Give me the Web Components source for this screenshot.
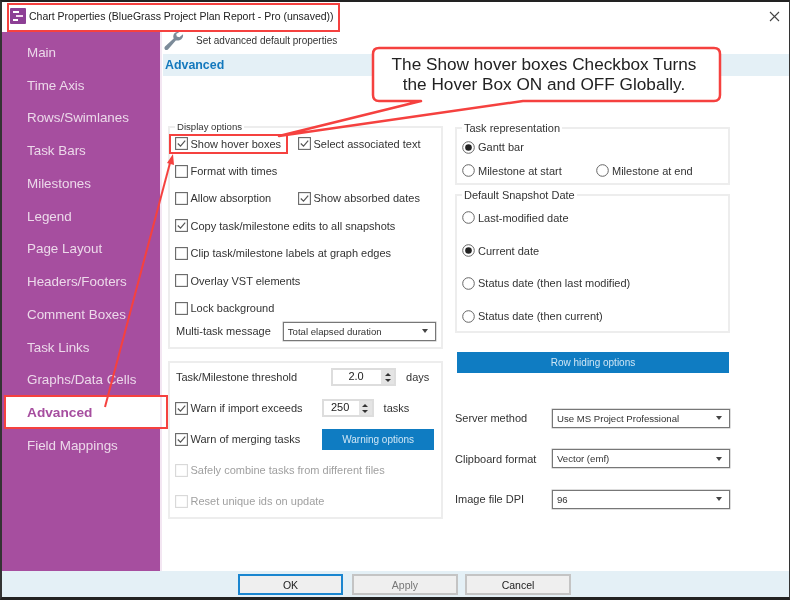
<!DOCTYPE html>
<html>
<head>
<meta charset="utf-8">
<title>Chart Properties</title>
<style>
  html, body { margin: 0; height: 100%; background: #fff; }
  body { font: 11px "Liberation Sans", Arial, sans-serif; color: #333; overflow: hidden; }
</style>
</head>
<body>
<chart-dialog>
  <side-nav slot="nav" selected="Advanced"></side-nav>
  <section-head slot="head" hint="Set advanced default properties" heading="Advanced"></section-head>

  <div slot="left" style="display:flex;flex-direction:column;gap:12px">
    <group-box legend="Display options" legend-size="9.6" rows="repeat(7,27.4px) 19px" offset="-2" end="6">
      <check-row checked label="Show hover boxes" side-label="Select associated text" side-checked></check-row>
      <check-row label="Format with times"></check-row>
      <check-row label="Allow absorption" side-label="Show absorbed dates" side-checked></check-row>
      <check-row checked label="Copy task/milestone edits to all snapshots"></check-row>
      <check-row label="Clip task/milestone labels at graph edges"></check-row>
      <check-row label="Overlay VST elements"></check-row>
      <check-row label="Lock background"></check-row>
      <form-row label="Multi-task message" gap="12" indent="1.5"><drop-down value="Total elapsed duration" width="153"></drop-down></form-row>
    </group-box>
    <group-box rows="repeat(5,31px)" offset="-1">
      <form-row label="Task/Milestone threshold" gap="34" indent="1.5"><spin-box value="2.0" width="65"></spin-box><span style="margin-left:10px">days</span></form-row>
      <check-row checked label="Warn if import exceeds" gap="19"><spin-box value="250" width="52"></spin-box><span style="margin-left:10px">tasks</span></check-row>
      <check-row checked label="Warn of merging tasks" gap="22"><flat-button width="112" height="21">Warning options</flat-button></check-row>
      <check-row disabled label="Safely combine tasks from different files"></check-row>
      <check-row disabled label="Reset unique ids on update"></check-row>
    </group-box>
  </div>

  <div slot="right" style="display:flex;flex-direction:column">
    <group-box legend="Task representation" rows="repeat(2,23.5px)" offset="2.5" style="margin-bottom:5px">
      <radio-row checked label="Gantt bar"></radio-row>
      <radio-row label="Milestone at start" side-label="Milestone at end"></radio-row>
    </group-box>
    <group-box legend="Default Snapshot Date" rows="repeat(4,32.8px)" offset="2" end="-1.4">
      <radio-row label="Last-modified date"></radio-row>
      <radio-row checked label="Current date"></radio-row>
      <radio-row label="Status date (then last modified)"></radio-row>
      <radio-row label="Status date (then current)"></radio-row>
    </group-box>
    <flat-button width="272" height="21" style="margin:18.5px 0 0 2px">Row hiding options</flat-button>
    <div style="display:flex;flex-direction:column;gap:21.5px;margin-top:36px">
      <form-row label="Server method" label-width="97"><drop-down value="Use MS Project Professional" width="178"></drop-down></form-row>
      <form-row label="Clipboard format" label-width="97"><drop-down value="Vector (emf)" width="178"></drop-down></form-row>
      <form-row label="Image file DPI" label-width="97"><drop-down value="96" width="178"></drop-down></form-row>
    </div>
  </div>
</chart-dialog>
<red-markup></red-markup>

<script>
const sheet = `
  :host { box-sizing: border-box; }
  * { box-sizing: border-box; }
`

class ChartDialog extends HTMLElement {
  constructor() {
    super()
    this.attachShadow({ mode: 'open' })
    this.shadowRoot.innerHTML = `
      <style>${sheet}
        :host { display: flex; flex-direction: column; width: 790px; height: 600px; background: #fff;
          border-top: 2px solid #222; border-left: 2px solid #333; border-right: 1px solid #333; border-bottom: 3px solid #222;
          filter: blur(.45px); }
        .title { display: flex; align-items: center; height: 30px; flex: none; padding: 0 0 2px 8px; gap: 3px; color: #222; font-size: 10.5px; }
        .title svg { flex: none; }
        .close { margin-left: auto; margin-right: 9px; }
        .body { flex: 1; display: flex; min-height: 0; }
        .nav { width: 160px; flex: none; background: #a64e9f; border-right: 2px solid #f3e6f2; }
        .main { flex: 1; min-width: 0; padding-left: 1px; }
        .cols { display: flex; padding: 0 0 0 5px; }
        .col-left { width: 275px; flex: none; }
        .col-right { width: 275px; flex: none; margin-left: 12px; padding-top: 1px; }
        .foot { height: 26px; flex: none; background: #e4f0f6; display: flex; padding: 3px 0 0 236px; }
        .foot-in { display: flex; gap: 9px; }
        .foot-in dialog-button:last-child { margin-left: -2px; }
      </style>
      <div class="title">
        <svg width="16" height="16" viewBox="0 0 16 16">
          <rect width="16" height="16" rx="1" fill="#8d3f95"/>
          <rect x="3" y="3" width="6" height="2" fill="#fff"/>
          <rect x="6" y="7" width="7" height="2" fill="#f3d9ef"/>
          <rect x="3" y="11" width="5" height="2" fill="#fff"/>
        </svg>
        <span>Chart Properties (BlueGrass Project Plan Report - Pro (unsaved))</span>
        <svg class="close" width="11" height="11" viewBox="0 0 11 11"><path d="M1 1l9 9M10 1l-9 9" stroke="#444" stroke-width="1.1" fill="none"/></svg>
      </div>
      <div class="body">
        <div class="nav"><slot name="nav"></slot></div>
        <div class="main">
          <slot name="head"></slot>
          <div class="cols">
            <div class="col-left"><slot name="left"></slot></div>
            <div class="col-right"><slot name="right"></slot></div>
          </div>
        </div>
      </div>
      <div class="foot"><div class="foot-in">
        <dialog-button primary>OK</dialog-button>
        <dialog-button disabled>Apply</dialog-button>
        <dialog-button>Cancel</dialog-button>
      </div></div>`
  }
}

class SideNav extends HTMLElement {
  connectedCallback() {
    const names = ['Main', 'Time Axis', 'Rows/Swimlanes', 'Task Bars', 'Milestones', 'Legend', 'Page Layout',
      'Headers/Footers', 'Comment Boxes', 'Task Links', 'Graphs/Data Cells', 'Advanced', 'Field Mappings']
    const selected = this.getAttribute('selected')
    this.attachShadow({ mode: 'open' })
    this.shadowRoot.innerHTML = `
      <style>${sheet}
        :host { display: block; padding-top: 4px; }
        div { height: 32.75px; display: flex; align-items: center; padding-left: 25px; color: #ecd9ea; font-size: 13.4px; }
        .on { background: #fff; color: #a64e9f; font-weight: bold; font-size: 13.7px; margin-left: 3px; padding-left: 22px; }
      </style>
      ${names.map(n => `<div class="${n === selected ? 'on' : ''}">${n}</div>`).join('')}`
  }
}

class SectionHead extends HTMLElement {
  connectedCallback() {
    this.attachShadow({ mode: 'open' })
    this.shadowRoot.innerHTML = `
      <style>${sheet}
        :host { display: block; height: 90px; }
        .hint { height: 22px; display: flex; align-items: flex-start; gap: 12px; padding-left: 1px; font-size: 10px; color: #333; }
        .hint span { margin-top: 3px; }
        .bar { height: 22px; background: #e4f0f6; display: flex; align-items: center; padding-left: 2px;
          color: #1378bd; font-weight: bold; font-size: 12.4px; }
      </style>
      <div class="hint">
        <svg width="20" height="20" viewBox="0 0 20 20">
          <path d="M19 2.2l-3.6 3.1-2.6-.7-.6-2.5L15.400 0C12.500-.6 9.600 1 9.300 4c-.1 1 .1 1.800.4 2.500L1 14.500c-1.300 1.300-.3 4 2 3.500.5-.1.9-.4 1.200-.8L11.800 8.400c3.900 1.100 7.900-2 7.200-6.200z" fill="#7c8b99"/>
        </svg>
        <span>${this.getAttribute('hint')}</span>
      </div>
      <div class="bar">${this.getAttribute('heading')}</div>`
  }
}

class GroupBox extends HTMLElement {
  connectedCallback() {
    const legend = this.getAttribute('legend')
    this.attachShadow({ mode: 'open' })
    this.shadowRoot.innerHTML = `
      <style>${sheet}
        :host { display: block; }
        fieldset { margin: 0; border: 2px solid #ededed; padding: 0 5px 0 4.5px; min-width: 0; }
        legend { padding: 0 2px; margin-left: .5px; font-size: ${this.getAttribute('legend-size') || 11}px; line-height: 10px; color: #333; }
        .rows { display: grid; grid-template-rows: ${this.getAttribute('rows')}; align-items: center;
          margin-top: ${this.getAttribute('offset') || 0}px; margin-bottom: ${this.getAttribute('end') || 0}px; }
      </style>
      <fieldset>
        ${legend ? `<legend>${legend}</legend>` : ''}
        <div class="rows"><slot></slot></div>
      </fieldset>`
  }
}

const boxSvg = (checked, disabled) => `
  <svg width="13" height="13" viewBox="0 0 13 13" style="flex:none">
    <rect x=".6" y=".6" width="11.800" height="11.800" fill="#fff" stroke="${disabled ? '#d8d8d8' : '#666'}" stroke-width="1.100"/>
    ${checked ? '<path d="M2.800 6.500l2.700 2.700 4.700-5.500" stroke="#555" stroke-width="1.200" fill="none"/>' : ''}
  </svg>`

class CheckRow extends HTMLElement {
  connectedCallback() {
    const dis = this.hasAttribute('disabled')
    const side = this.getAttribute('side-label')
    const gap = this.getAttribute('gap')
    this.attachShadow({ mode: 'open' })
    this.shadowRoot.innerHTML = `
      <style>${sheet}
        :host { display: flex; align-items: center; color: ${dis ? '#a0a0a0' : '#333'}; }
        .c { display: flex; align-items: center; gap: 3px; white-space: nowrap; }
        .first { width: 123px; }
        .extra { display: flex; align-items: center; margin-left: ${gap || 0}px; }
      </style>
      <span class="c ${side ? 'first' : ''}">${boxSvg(this.hasAttribute('checked'), dis)}<span>${this.getAttribute('label')}</span></span>
      ${side ? `<span class="c">${boxSvg(this.hasAttribute('side-checked'), dis)}<span>${side}</span></span>` : ''}
      <span class="extra"><slot></slot></span>`
  }
}

const dotSvg = checked => `
  <svg width="13" height="13" viewBox="0 0 13 13" style="flex:none">
    <circle cx="6.500" cy="6.500" r="5.800" fill="#fff" stroke="#666" stroke-width="1"/>
    ${checked ? '<circle cx="6.500" cy="6.500" r="3.300" fill="#222"/>' : ''}
  </svg>`

class RadioRow extends HTMLElement {
  connectedCallback() {
    const side = this.getAttribute('side-label')
    this.attachShadow({ mode: 'open' })
    this.shadowRoot.innerHTML = `
      <style>${sheet}
        :host { display: flex; align-items: center; padding-left: .5px; color: #333; }
        .c { display: flex; align-items: center; gap: 3px; white-space: nowrap; }
        .first { width: 134px; }
      </style>
      <span class="c ${side ? 'first' : ''}">${dotSvg(this.hasAttribute('checked'))}<span>${this.getAttribute('label')}</span></span>
      ${side ? `<span class="c">${dotSvg(false)}<span>${side}</span></span>` : ''}`
  }
}

class FormRow extends HTMLElement {
  connectedCallback() {
    const w = this.getAttribute('label-width')
    this.attachShadow({ mode: 'open' })
    this.shadowRoot.innerHTML = `
      <style>${sheet}
        :host { display: flex; align-items: center; padding-left: ${this.getAttribute('indent') || 0}px; color: #333; white-space: nowrap; }
        .l { ${w ? `width: ${w}px; flex: none;` : ''} margin-right: ${this.getAttribute('gap') || 0}px; }
      </style>
      <span class="l">${this.getAttribute('label')}</span><slot></slot>`
  }
}

class DropDown extends HTMLElement {
  connectedCallback() {
    this.attachShadow({ mode: 'open' })
    this.shadowRoot.innerHTML = `
      <style>${sheet}
        :host { display: flex; align-items: center; justify-content: space-between; width: ${this.getAttribute('width')}px; height: 19px;
          border: 1px solid #777; box-shadow: 0 0 0 .5px #bbb; padding: 0 7px 0 4px; background: #fff; color: #333; font-size: 9.6px; }
        i { width: 0; height: 0; border: 3.500px solid transparent; border-top: 4px solid #444; border-bottom: 0; }
      </style>
      <span>${this.getAttribute('value')}</span><i></i>`
  }
}

class SpinBox extends HTMLElement {
  connectedCallback() {
    this.attachShadow({ mode: 'open' })
    this.shadowRoot.innerHTML = `
      <style>${sheet}
        :host { display: flex; width: ${this.getAttribute('width')}px; height: 18px; border: 2px solid #ddd; background: #fff; color: #222; }
        .v { flex: 1; text-align: center; line-height: 12px; padding-right: 2px; }
        .s { width: 13px; background: #e4e4e4; display: flex; flex-direction: column; align-items: center; justify-content: center; gap: 3px; }
        .u, .d { width: 0; height: 0; border: 3px solid transparent; }
        .u { border-bottom: 3px solid #333; border-top: 0; }
        .d { border-top: 3px solid #333; border-bottom: 0; }
      </style>
      <span class="v">${this.getAttribute('value')}</span>
      <span class="s"><i class="u"></i><i class="d"></i></span>`
  }
}

class FlatButton extends HTMLElement {
  connectedCallback() {
    this.attachShadow({ mode: 'open' })
    this.shadowRoot.innerHTML = `
      <style>${sheet}
        :host { display: flex; align-items: center; justify-content: center; width: ${this.getAttribute('width')}px; height: ${this.getAttribute('height')}px;
          background: #0f7cc2; color: #cfe6f5; font-size: 10px; }
      </style>
      <slot></slot>`
  }
}

class DialogButton extends HTMLElement {
  connectedCallback() {
    const primary = this.hasAttribute('primary')
    const dis = this.hasAttribute('disabled')
    this.attachShadow({ mode: 'open' })
    this.shadowRoot.innerHTML = `
      <style>${sheet}
        :host { display: flex; align-items: center; justify-content: center; width: ${primary ? 105 : 106}px; height: 21px; font-size: 10.5px;
          background: #efefef; border: 2px solid ${primary ? '#1a86d0' : '#c4c4c4'}; color: ${dis ? '#777' : '#222'}; }
      </style>
      <slot></slot>`
  }
}

// annotations drawn on top of the screenshot: red frames, callout and arrows
class RedMarkup extends HTMLElement {
  constructor() {
    super()
    this.attachShadow({ mode: 'open' })
    this.shadowRoot.innerHTML = `
      <style>${sheet}
        :host { position: absolute; inset: 0; pointer-events: none; filter: blur(.35px); }
        svg { position: absolute; left: 0; top: 0; }
        .note { position: absolute; left: 371px; top: 49px; width: 346px; height: 50px; display: flex; align-items: center; justify-content: center;
          text-align: center; font-size: 17.2px; line-height: 20.500px; color: #222; }
      </style>
      <svg width="792" height="600" viewBox="0 0 792 600" fill="none" stroke="#f5413f" stroke-width="2">
        <rect x="8" y="4" width="331" height="27"/>
        <rect x="170" y="135" width="117" height="18"/>
        <rect x="5" y="396" width="162" height="32"/>
        <path d="M105 407L170 163" stroke-width="2"/>
        <path d="M173 154l-6 9 7 2z" fill="#f5413f" stroke="none"/>
        <path d="M381 48H714q6 0 6 6v41q0 6-6 6H523L279 136 421 101H379q-6 0-6-6V54q0-6 6-6z" fill="#fff" stroke-width="2.500" stroke-linejoin="round"/>
      </svg>
      <div class="note">The Show hover boxes Checkbox Turns<br>the Hover Box ON and OFF Globally.</div>`
  }
}

customElements.define('chart-dialog', ChartDialog)
customElements.define('side-nav', SideNav)
customElements.define('section-head', SectionHead)
customElements.define('group-box', GroupBox)
customElements.define('check-row', CheckRow)
customElements.define('radio-row', RadioRow)
customElements.define('form-row', FormRow)
customElements.define('drop-down', DropDown)
customElements.define('spin-box', SpinBox)
customElements.define('flat-button', FlatButton)
customElements.define('dialog-button', DialogButton)
customElements.define('red-markup', RedMarkup)
</script>
</body>
</html>
